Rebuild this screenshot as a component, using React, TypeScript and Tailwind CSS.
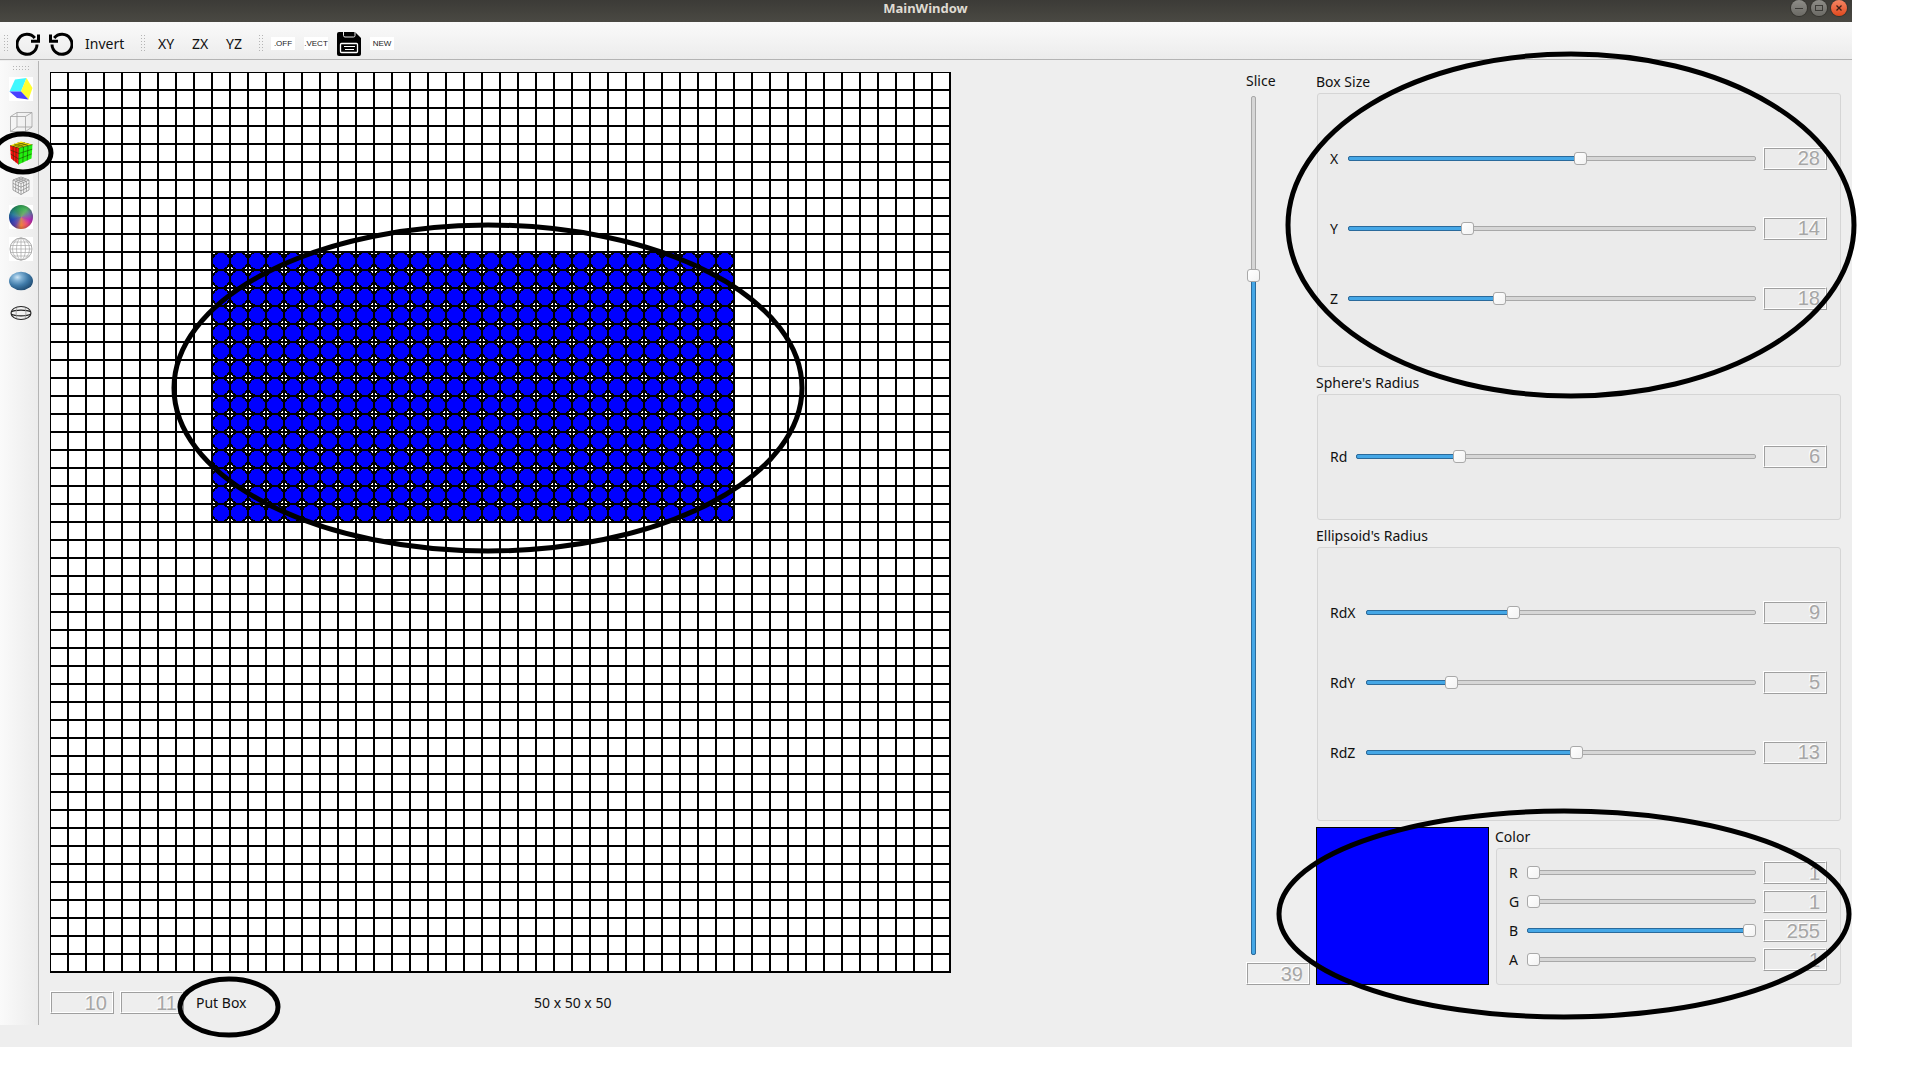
import React, { useState } from "react";

const TITLE_BTN =
  "flex size-4 items-center justify-center rounded-full bg-gradient-to-b from-[#8e8d88] to-[#6b6a65] shadow-[0_0_0_1px_#35342f]";

function Lcd({ value, label }: { value: number; label: string }) {
  return (
    <output
      aria-label={label}
      className="block h-[23px] w-16 shrink-0 border border-t-white border-r-[#9f9f9f] border-b-[#9f9f9f] border-l-white"
    >
      <span className="flex h-full items-center justify-end border border-t-[#9f9f9f] border-r-white border-b-white border-l-[#9f9f9f] pr-[5px] font-['Liberation_Sans',sans-serif] text-[20px] leading-none text-[#a6a6a6] [text-shadow:-1px_-1px_0_#fff]">
        {value}
      </span>
    </output>
  );
}

const THUMB =
  "[&::-webkit-slider-thumb]:size-[13px] [&::-webkit-slider-thumb]:appearance-none [&::-webkit-slider-thumb]:rounded-[3px] [&::-webkit-slider-thumb]:border [&::-webkit-slider-thumb]:border-[#a9a9a9] [&::-webkit-slider-thumb]:bg-gradient-to-br [&::-webkit-slider-thumb]:from-white [&::-webkit-slider-thumb]:to-[#f3f3f3]";

type SliderProps = { id: string; value: number; min: number; max: number; onChange: (v: number) => void };

function HSlider({ id, value, min, max, onChange }: SliderProps) {
  const pct = ((value - min) / (max - min)) * 100;
  return (
    <div className="grid h-[13px] min-w-0 flex-1 items-center">
      <div className="flex h-[5px] overflow-hidden rounded-[2px] border border-[#a8a8a8] bg-[#d6d6d6] [grid-area:1/1]" />
      <div
        className="h-[5px] rounded-[2px] border border-[#2a6a9b] bg-[#45a7e6] [grid-area:1/1]"
        style={{ width: `${pct}%`, visibility: pct > 0 ? "visible" : "hidden" }}
      />
      <input
        id={id}
        type="range"
        min={min}
        max={max}
        value={value}
        onChange={(e) => onChange(Number(e.target.value))}
        className={`m-0 h-[13px] w-full appearance-none bg-transparent [grid-area:1/1] ${THUMB}`}
      />
    </div>
  );
}

function VSlider({ id, value, min, max, onChange }: SliderProps) {
  const pct = ((value - min) / (max - min)) * 100;
  return (
    <div className="ml-[1px] grid w-[13px] flex-1 grid-rows-1 justify-items-center">
      <div className="w-[5px] rounded-[2px] border border-[#a8a8a8] bg-[#d6d6d6] [grid-area:1/1]" />
      <div
        className="w-[5px] self-end rounded-[2px] border border-[#2a6a9b] bg-[#45a7e6] [grid-area:1/1]"
        style={{ height: `${pct}%` }}
      />
      <input
        id={id}
        type="range"
        min={min}
        max={max}
        value={value}
        onChange={(e) => onChange(Number(e.target.value))}
        className={`m-0 h-full w-[13px] appearance-none bg-transparent [direction:rtl] [grid-area:1/1] [writing-mode:vertical-lr] ${THUMB}`}
      />
    </div>
  );
}

type RowProps = { label: string; initial: number; min: number; max: number; rowClass: string; labelClass: string };

function SliderRow({ label, initial, min, max, rowClass, labelClass }: RowProps) {
  const [value, setValue] = useState(initial);
  const id = `slider-${label}`;
  return (
    <div className={`flex items-center ${rowClass}`}>
      <label htmlFor={id} className={`mr-1.5 shrink-0 ${labelClass}`}>
        {label}
      </label>
      <HSlider id={id} value={value} min={min} max={max} onChange={setValue} />
      <div className="ml-[7px]">
        <Lcd value={value} label={`${label} value`} />
      </div>
    </div>
  );
}

function Group({ title, className, children }: { title: string; className: string; children: React.ReactNode }) {
  return (
    <section aria-label={title} className="min-w-0">
      <h2 className="h-[21px] leading-5">{title}</h2>
      <div className={`ml-px rounded-[3px] border border-[#d5d5d5] bg-[#ebebeb] pr-[13px] pl-3 ${className}`}>
        {children}
      </div>
    </section>
  );
}

function VGrip() {
  return (
    <svg width="5" height="17" className="shrink-0" aria-hidden="true">
      {[0, 3, 6, 9, 12, 15].map((y) => (
        <g key={y} fill="#b5b5b5">
          <rect x="0" y={y} width="1" height="1" />
          <rect x="3" y={y} width="1" height="1" />
        </g>
      ))}
    </svg>
  );
}

function HGrip() {
  return (
    <svg width="17" height="5" className="shrink-0" aria-hidden="true">
      {[0, 3, 6, 9, 12, 15].map((x) => (
        <g key={x} fill="#b5b5b5">
          <rect x={x} y="0" width="1" height="1" />
          <rect x={x} y="3" width="1" height="1" />
        </g>
      ))}
    </svg>
  );
}

const Redo = () => (
  <svg width="24" height="24" viewBox="0 0 24 24" fill="none" stroke="#000" strokeWidth="3">
    <path d="M21 12.5A10 10 0 1 1 18.8 6" />
    <path d="M22.5 2.5V9.2H15" />
  </svg>
);
const Undo = () => (
  <svg width="24" height="24" viewBox="0 0 24 24" fill="none" stroke="#000" strokeWidth="3">
    <path d="M3 12.5A10 10 0 1 0 5.2 6" />
    <path d="M1.5 2.5V9.2H9" />
  </svg>
);
const Save = () => (
  <svg width="24" height="24" viewBox="0 0 24 24">
    <path d="M2 0H18L24 6V22a2 2 0 0 1-2 2H2a2 2 0 0 1-2-2V2a2 2 0 0 1 2-2z" fill="#000" />
    <path d="M6.5 0V3.5a1.5 1.5 0 0 0 1.5 1.5H16.5a1.5 1.5 0 0 0 1.5-1.5V0" fill="none" stroke="#eee" strokeWidth="1" />
    <rect x="3.5" y="11.5" width="17" height="9" rx="1" fill="none" stroke="#fff" strokeWidth="1.3" />
    <path d="M7 14.5H18M8 17.5H17" stroke="#fff" strokeWidth="1.2" />
  </svg>
);

const SolidCube = () => (
  <svg width="24" height="24" viewBox="0 0 24 24">
    <rect width="24" height="24" fill="#fff" />
    <path d="M6 2.5L17.5 1L12 14.5L0.5 14.5z" fill="#40f8ff" />
    <path d="M17.5 1L23.5 11L19.5 22.5L12 14.5z" fill="#ffff30" />
    <path d="M0.5 14.5H12L19.5 22.5L8 21z" fill="#4840ff" />
  </svg>
);
const WireCube = () => (
  <svg width="24" height="24" viewBox="0 0 24 24" fill="none" stroke="#a2a2a2" strokeWidth="0.8">
    <path d="M1.5 7.5H16.5V22.5H1.5zM8 3.5H23V18H8zM1.5 7.5L8 3.5M16.5 7.5L23 3.5M16.5 22.5L23 18M1.5 22.5L8 18" />
  </svg>
);
const Rubik = () => (
  <svg width="24" height="24" viewBox="0 0 24 24">
    <path d="M1 4.5L12 0.5L23.5 3.5L10 7z" fill="#ffe600" />
    <path d="M1 4.5L10 7L9.5 23.5L2 17.5z" fill="#ff1010" />
    <path d="M10 7L23.5 3.5L22.5 17.5L9.5 23.5z" fill="#22f010" />
    <path
      d="M1 4.5L10 7L23.5 3.5M10 7L9.5 23.5M4 5.5L4.5 19.5M7 6.3L7 21.5M1.3 9L10 12.5M1.6 13L9.7 18M14.5 6L13.8 21.5M19 5L18.2 19.5M10 12.5L23.2 8.2M9.7 18L22.8 12.8M5 3L14.5 5.8M8.5 1.8L19 4.6M4 5.3L16 1.6M7 6.2L19.5 2.5"
      fill="none"
      stroke="#183000"
      strokeOpacity="0.75"
      strokeWidth="0.7"
    />
  </svg>
);
const RubikWire = () => (
  <svg width="24" height="24" viewBox="0 0 24 24">
    <rect width="24" height="24" fill="#f7f7f7" />
    <path
      d="M4 7L12 4L20 7L12 10.5zM4 7V17L12 21.5L20 17V7M12 10.5V21.5M6.7 8.2V18.5M9.3 9.3V20M14.7 9.3V20M17.3 8.2V18.5M4 10.3L12 14.2L20 10.3M4 13.6L12 17.8L20 13.6M6.7 6L14.7 9.3M9.3 5L17.3 8.2M17.3 6L9.3 9.3M14.7 5L6.7 8.2"
      fill="none"
      stroke="#8f8f8f"
      strokeWidth="0.8"
    />
  </svg>
);
const ColorBall = () => (
  <span className="grid size-6 bg-white">
    <span className="rounded-full bg-[conic-gradient(from_0deg,#30b050,#50c060,#7070b0,#c020c0,#ff5070,#ff8030,#6040b0,#2040c0,#2080a0,#209060,#30b050)] [grid-area:1/1]" />
    <span className="rounded-full bg-[radial-gradient(circle,rgba(160,150,130,0.6)_0%,rgba(120,120,120,0.1)_50%,rgba(0,0,30,0.5)_100%)] [grid-area:1/1]" />
  </span>
);
const WireBall = () => (
  <svg width="24" height="24" viewBox="0 0 24 24">
    <rect width="24" height="24" fill="#fff" />
    <g fill="none" stroke="#a8a8a8" strokeWidth="0.7">
      <circle cx="12" cy="12" r="11" stroke="#888" />
      <ellipse cx="12" cy="12" rx="8.5" ry="11" />
      <ellipse cx="12" cy="12" rx="4.5" ry="11" />
      <path d="M12 1V23M3.5 5H20.5M1.5 8.5H22.5M1 12H23M1.5 15.5H22.5M3.5 19H20.5" />
    </g>
  </svg>
);
const Ellipsoid = () => (
  <svg width="24" height="24" viewBox="0 0 24 24">
    <defs>
      <radialGradient id="ellipsoid-fill" cx="0.35" cy="0.3" r="0.75">
        <stop offset="0" stopColor="#cfe6f5" />
        <stop offset="0.25" stopColor="#7fb0d4" />
        <stop offset="0.6" stopColor="#3f7aa8" />
        <stop offset="1" stopColor="#1f4a70" />
      </radialGradient>
    </defs>
    <ellipse cx="12" cy="12" rx="12" ry="9.3" fill="url(#ellipsoid-fill)" />
  </svg>
);
const EllipsoidWire = () => (
  <svg width="24" height="24" viewBox="0 0 24 24" fill="none" stroke="#222" strokeWidth="1.1">
    <ellipse cx="12" cy="12" rx="10" ry="6.5" />
    <path d="M2 11C6 8.5 18 8.5 22 11M2 13C6 15.5 18 15.5 22 13" />
    <path d="M8 6.5C6.8 9 6.8 15 8 17.5M16 6.5C17.2 9 17.2 15 16 17.5" stroke="#999" strokeWidth="0.8" />
  </svg>
);

const TOOLS = [
  { name: "Put voxel", icon: <SolidCube /> },
  { name: "Cut voxel", icon: <WireCube /> },
  { name: "Put box", icon: <Rubik /> },
  { name: "Cut box", icon: <RubikWire /> },
  { name: "Put sphere", icon: <ColorBall /> },
  { name: "Cut sphere", icon: <WireBall /> },
  { name: "Put ellipsoid", icon: <Ellipsoid /> },
  { name: "Cut ellipsoid", icon: <EllipsoidWire /> },
];

const CELL = 18;
const COUNT = 50;

function VoxelCanvas() {
  const lines = Array.from({ length: COUNT + 1 }, (_, i) => i * CELL);
  const voxels: { x: number; y: number }[] = [];
  for (let r = 10; r < 25; r++) for (let c = 9; c < 38; c++) voxels.push({ x: c * CELL + 9, y: r * CELL + 9 });
  return (
    <svg width="901" height="901" className="shrink-0" role="img" aria-label="Voxel slice" shapeRendering="crispEdges">
      <rect width="901" height="901" fill="#fff" />
      {lines.map((p) => (
        <path key={p} d={`M${p} 0V901M0 ${p}H901`} stroke="#000" strokeWidth="2" />
      ))}
      {voxels.map((v) => (
        <circle key={`${v.x}-${v.y}`} cx={v.x} cy={v.y} r="9" fill="#00f" stroke="#000" strokeWidth="2" />
      ))}
    </svg>
  );
}

function Annotations() {
  return (
    <svg
      width="1920"
      height="1080"
      className="pointer-events-none absolute top-0 left-0"
      fill="none"
      stroke="#000"
      strokeWidth="5"
      aria-hidden="true"
    >
      <ellipse cx="1571" cy="225" rx="283" ry="171" />
      <ellipse cx="1564" cy="914" rx="285" ry="103" />
      <ellipse cx="488" cy="388" rx="314" ry="163" />
      <ellipse cx="229" cy="1007" rx="49" ry="28" />
      <ellipse cx="23" cy="153" rx="28" ry="19" />
    </svg>
  );
}

export default function App() {
  const [slice, setSlice] = useState(39);
  return (
    <div className="relative min-h-screen overflow-hidden bg-white pr-[68px] font-['Noto_Sans',sans-serif] text-[14px] text-[#111]">
      <div className="flex flex-col bg-[#eeeeee]">
        <header className="flex h-[22px] items-start bg-gradient-to-b from-[#3c3b37] to-[#4a4943] pr-[5px]">
          <div className="w-[60px]" />
          <h1 className="flex-1 text-center text-[13px] leading-[17px] font-bold text-[#dfdbd2]">MainWindow</h1>
          <div className="flex gap-1">
            <button type="button" aria-label="Minimize" className={TITLE_BTN}>
              <span className="h-px w-2 bg-[#3c3b37]" />
            </button>
            <button type="button" aria-label="Maximize" className={TITLE_BTN}>
              <span className="h-1.5 w-2 border border-[#3c3b37]" />
            </button>
            <button
              type="button"
              aria-label="Close"
              className="flex size-4 items-center justify-center rounded-full bg-gradient-to-b from-[#f48462] to-[#e0481a] shadow-[0_0_0_1px_#35342f]"
            >
              <svg width="6" height="6" viewBox="0 0 6 6" stroke="#3c2018" strokeWidth="1.3">
                <path d="M0.5 0.5L5.5 5.5M5.5 0.5L0.5 5.5" />
              </svg>
            </button>
          </div>
        </header>

        <nav
          aria-label="Toolbar"
          className="flex h-[38px] items-center border-b border-[#b4b4b4] bg-gradient-to-b from-[#fafafa] to-[#ececec] pt-1.5 pl-1"
        >
          <VGrip />
          <div className="ml-[7px] flex items-center gap-[9px]">
            <button type="button" aria-label="Redo">
              <Redo />
            </button>
            <button type="button" aria-label="Undo">
              <Undo />
            </button>
          </div>
          <button type="button" className="mr-4 ml-3 w-10 text-left">
            Invert
          </button>
          <VGrip />
          <div className="mr-4 ml-[11px] flex gap-4">
            <button type="button" className="w-[18px]">
              XY
            </button>
            <button type="button" className="w-[18px]">
              ZX
            </button>
            <button type="button" className="w-[18px]">
              YZ
            </button>
          </div>
          <VGrip />
          <div className="ml-[7px] flex items-center gap-[9px] font-['Liberation_Sans',sans-serif] text-[8px] leading-[13px] text-[#222]">
            <button type="button" className="flex w-6 justify-center bg-white">
              .OFF
            </button>
            <button type="button" className="flex w-6 justify-center bg-white">
              .VECT
            </button>
            <button type="button" aria-label="Save">
              <Save />
            </button>
            <button type="button" className="flex w-6 justify-center bg-white">
              NEW
            </button>
          </div>
        </nav>

        <main className="flex">
          <aside className="mt-px flex w-[39px] shrink-0 flex-col items-center border-r border-[#b4b4b4] bg-gradient-to-r from-[#fafafa] to-[#ececec] pt-[5px] pl-1">
            <HGrip />
            <div className="mt-1.5 flex flex-col gap-2">
              {TOOLS.map((t) => (
                <button key={t.name} type="button" aria-label={t.name} className="block size-6">
                  {t.icon}
                </button>
              ))}
            </div>
          </aside>

          <div className="flex min-w-0 flex-1 items-start gap-1.5 pt-3 pr-[11px] pb-[11px] pl-[11px]">
            <div className="flex min-w-0 flex-1 flex-col">
              <VoxelCanvas />
              <div className="mt-[18px] flex h-[23px] items-center gap-1.5">
                <Lcd value={10} label="Column" />
                <Lcd value={11} label="Row" />
                <p className="ml-1.5 w-[332px]">Put Box</p>
                <p>50 x 50 x 50</p>
              </div>
            </div>

            <div className="flex w-16 shrink-0 flex-col self-start">
              <label htmlFor="slider-slice" className="h-6 leading-[18px]">
                Slice
              </label>
              <div className="flex h-[859px] flex-col">
                <VSlider id="slider-slice" value={slice} min={0} max={49} onChange={setSlice} />
              </div>
              <div className="mt-[7px]">
                <Lcd value={slice} label="Slice value" />
              </div>
            </div>

            <div className="flex w-[525px] shrink-0 flex-col gap-1.5">
              <Group title="Box Size" className="pt-[29px] pb-[33px]">
                <SliderRow label="X" initial={28} min={0} max={49} rowClass="h-[70px]" labelClass="w-3" />
                <SliderRow label="Y" initial={14} min={0} max={49} rowClass="h-[70px]" labelClass="w-3" />
                <SliderRow label="Z" initial={18} min={0} max={49} rowClass="h-[70px]" labelClass="w-3" />
              </Group>
              <Group title="Sphere's Radius" className="pt-[26px] pb-[28px]">
                <SliderRow label="Rd" initial={6} min={0} max={24} rowClass="h-[70px]" labelClass="w-5" />
              </Group>
              <Group title="Ellipsoid's Radius" className="pt-[29px] pb-[33px]">
                <SliderRow label="RdX" initial={9} min={0} max={24} rowClass="h-[70px]" labelClass="w-[30px]" />
                <SliderRow label="RdY" initial={5} min={0} max={24} rowClass="h-[70px]" labelClass="w-[30px]" />
                <SliderRow label="RdZ" initial={13} min={0} max={24} rowClass="h-[70px]" labelClass="w-[30px]" />
              </Group>
              <div className="flex gap-1.5">
                <div className="w-[173px] shrink-0 border border-black bg-[#0000ff]" />
                <div className="min-w-0 flex-1">
                  <Group title="Color" className="pt-[9px] pb-[10px]">
                    <SliderRow label="R" initial={1} min={1} max={255} rowClass="h-[29px]" labelClass="w-3" />
                    <SliderRow label="G" initial={1} min={1} max={255} rowClass="h-[29px]" labelClass="w-3" />
                    <SliderRow label="B" initial={255} min={1} max={255} rowClass="h-[29px]" labelClass="w-3" />
                    <SliderRow label="A" initial={1} min={1} max={255} rowClass="h-[29px]" labelClass="w-3" />
                  </Group>
                </div>
              </div>
            </div>
          </div>
        </main>
        <footer className="h-[22px]" />
      </div>
      <Annotations />
    </div>
  );
}
